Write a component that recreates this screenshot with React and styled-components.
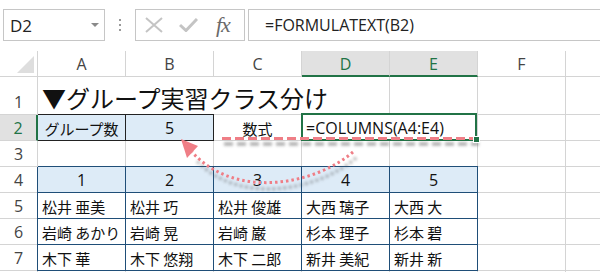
import React from 'react';
import styled, { createGlobalStyle } from 'styled-components';

const GlobalStyle = createGlobalStyle`
  html, body { margin: 0; padding: 0; background: #fff; }
  body { overflow: hidden; }
`;

const GRID = '#d4d4d4';
const NAVY = '#1f4e78';
const GREEN = '#217346';
const FILL = '#ddebf7';
const UI_FONT = `"Open Sans", "Noto Sans", sans-serif`;
const CELL_FONT = `"Noto Sans CJK JP", "Noto Sans", sans-serif`;
const LATIN_FONT = `"Open Sans", "Noto Sans CJK JP", sans-serif`;

// Page
const Page = styled.div`
  position: relative;
  width: 600px;
  height: 272px;
  overflow: hidden;
  background: #fff;
`;

// Formula bar
const FormulaBar = styled.div`
  height: 51px;
  box-sizing: border-box;
  padding: 9px 0 0 3px;
  display: flex;
  align-items: flex-start;
`;

const NameBox = styled.div`
  width: 102px;
  height: 32px;
  box-sizing: border-box;
  border: 1px solid #c6c6c6;
  display: flex;
  align-items: center;
  justify-content: space-between;
  padding: 0 5px 0 6px;
  font-family: ${UI_FONT};
  font-size: 17px;
  color: #222;
`;

const Caret = styled.span`
  width: 0;
  height: 0;
  border-left: 4px solid transparent;
  border-right: 4px solid transparent;
  border-top: 4px solid #8a8a8a;
`;

const Grip = styled.div`
  width: 30px;
  height: 32px;
  display: flex;
  flex-direction: column;
  align-items: center;
  justify-content: center;
  gap: 3px;
  span {
    width: 2px;
    height: 2px;
    background: #9a9a9a;
  }
`;

const FxBox = styled.div`
  width: 110px;
  height: 32px;
  box-sizing: border-box;
  border: 1px solid #c6c6c6;
  display: flex;
  align-items: center;
  padding: 0 0 0 9px;
  gap: 16px;
`;

const Fx = styled.span`
  font-family: "Liberation Serif", serif;
  font-style: italic;
  font-size: 22px;
  color: #6a6a6a;
  margin-left: 2px;
  letter-spacing: -1px;
`;

const FormulaInput = styled.div`
  flex: 1;
  margin-left: 3px;
  height: 32px;
  box-sizing: border-box;
  border: 1px solid #c6c6c6;
  border-right: none;
  display: flex;
  align-items: center;
  padding-left: 16px;
  font-family: ${UI_FONT};
  font-size: 16px;
  color: #222;
`;

// Sheet grid
const Sheet = styled.div`
  display: grid;
  grid-template-columns: 38px repeat(7, 88px);
  grid-template-rows: 26px 38px repeat(7, 26px);
`;

const Corner = styled.div`
  box-sizing: border-box;
  border-right: 1px solid ${GRID};
  border-bottom: 1px solid ${GRID};
  display: flex;
  align-items: flex-end;
  justify-content: flex-end;
  padding: 0 3px 3px 0;
  span {
    width: 0;
    height: 0;
    border-left: 17px solid transparent;
    border-bottom: 17px solid #dedede;
  }
`;

const ColHead = styled.div`
  box-sizing: border-box;
  border-right: 1px solid ${GRID};
  border-bottom: ${p => (p.$on ? `2px solid ${GREEN}` : `1px solid ${GRID}`)};
  background: ${p => (p.$on ? '#e1e1e1' : '#fff')};
  color: ${p => (p.$on ? GREEN : '#444')};
  font-family: ${UI_FONT};
  font-size: 16px;
  display: flex;
  align-items: center;
  justify-content: center;
  padding-top: 1px;
`;

const RowHead = styled.div`
  box-sizing: border-box;
  border-right: ${p => (p.$on ? `2px solid ${GREEN}` : `1px solid ${GRID}`)};
  border-bottom: 1px solid ${GRID};
  background: ${p => (p.$on ? '#e1e1e1' : '#fff')};
  color: ${p => (p.$on ? GREEN : '#444')};
  font-family: ${UI_FONT};
  font-size: 16px;
  display: flex;
  align-items: flex-end;
  justify-content: center;
  padding-bottom: 1px;
`;

const Cell = styled.div`
  box-sizing: border-box;
  grid-column: span ${p => p.$span || 1};
  border-right: 1px solid ${p => p.$line || GRID};
  border-bottom: 1px solid ${p => p.$line || GRID};
  box-shadow: ${p =>
    p.$line
      ? `0 -1px 0 ${p.$line}${p.$open ? '' : `, -1px 0 0 ${p.$line}`}`
      : 'none'};
  background: ${p => p.$bg || '#fff'};
  display: flex;
  align-items: flex-end;
  justify-content: ${p => (p.$center ? 'center' : 'flex-start')};
  padding: 0 4px 4px;
  font-family: ${p => (p.$latin ? LATIN_FONT : CELL_FONT)};
  font-size: ${p => p.$size || 15}px;
  line-height: 1;
  color: #111;
  white-space: nowrap;
`;

const Selected = styled(Cell)`
  position: relative;
  &::after {
    content: '';
    position: absolute;
    left: -1px;
    top: -2px;
    right: 0;
    bottom: -1px;
    border: 2px solid ${GREEN};
  }
  &::before {
    content: '';
    position: absolute;
    right: -3px;
    bottom: -3px;
    width: 5px;
    height: 5px;
    background: ${GREEN};
    border: 1px solid #fff;
    z-index: 1;
  }
`;

const Overlay = styled.svg`
  position: absolute;
  left: 0;
  top: 0;
  pointer-events: none;
`;

// G is off the right edge, its letter never shows
const cols = ['A', 'B', 'C', 'D', 'E', 'F', ''];

const names = [
  ['松井 亜美', '松井 巧', '松井 俊雄', '大西 璃子', '大西 大'],
  ['岩崎 あかり', '岩崎 晃', '岩崎 巌', '杉本 理子', '杉本 碧'],
  ['木下 華', '木下 悠翔', '木下 二郎', '新井 美紀', '新井 新'],
];

function Blank({ n }) {
  return Array.from({ length: n }, (_, i) => <Cell key={i} />);
}

export default function App() {
  return (
    <Page>
      <GlobalStyle />
      <FormulaBar>
        <NameBox>
          D2
          <Caret />
        </NameBox>
        <Grip>
          <span />
          <span />
          <span />
        </Grip>
        <FxBox>
          <svg width="18" height="16" viewBox="0 0 18 16">
            <path d="M1 1 L17 15 M17 1 L1 15" stroke="#c4c4c4" strokeWidth="2" fill="none" />
          </svg>
          <svg width="19" height="14" viewBox="0 0 19 14">
            <path d="M1 7 L7 12.5 L18 1" stroke="#c4c4c4" strokeWidth="3" fill="none" />
          </svg>
          <Fx>fx</Fx>
        </FxBox>
        <FormulaInput>=FORMULATEXT(B2)</FormulaInput>
      </FormulaBar>

      <Sheet>
        <Corner>
          <span />
        </Corner>
        {cols.map((c, i) => (
          <ColHead key={i} $on={c === 'D' || c === 'E'}>
            {c}
          </ColHead>
        ))}

        <RowHead>1</RowHead>
        <Cell $span={4} $size={24}>
          ▼グループ実習クラス分け
        </Cell>
        <Blank n={3} />

        <RowHead $on>2</RowHead>
        <Cell $line="#222" $bg={FILL} $center $open>
          グループ数
        </Cell>
        <Cell $line="#222" $bg={FILL} $center $latin $size={16}>
          5
        </Cell>
        <Cell $center>数式</Cell>
        <Selected $span={2} $latin $size={16}>
          =COLUMNS(A4:E4)
        </Selected>
        <Blank n={2} />

        <RowHead>3</RowHead>
        <Blank n={7} />

        <RowHead>4</RowHead>
        {[1, 2, 3, 4, 5].map(n => (
          <Cell key={n} $line={NAVY} $bg={FILL} $center $latin $size={16}>
            {n}
          </Cell>
        ))}
        <Blank n={2} />

        {names.map((row, i) => (
          <React.Fragment key={i}>
            <RowHead>{i + 5}</RowHead>
            {row.map(name => (
              <Cell key={name} $line={NAVY}>
                {name}
              </Cell>
            ))}
            <Blank n={2} />
          </React.Fragment>
        ))}

        <RowHead />
        <Blank n={7} />
      </Sheet>

      <Overlay width="600" height="272" viewBox="0 0 600 272">
        <defs>
          <filter id="soft" x="-20%" y="-50%" width="140%" height="200%">
            <feGaussianBlur stdDeviation="1.6" />
          </filter>
        </defs>
        <g filter="url(#soft)" opacity="0.55">
          <line x1="224" y1="144" x2="479" y2="144" stroke="#555" strokeWidth="3" strokeDasharray="9 4" />
          <path d="M356 158 C 318 191, 238 206, 196 160" stroke="#555" strokeWidth="3" strokeDasharray="2.5 3" fill="none" />
        </g>
        <line x1="222" y1="138.5" x2="477" y2="138.5" stroke="#ef7e86" strokeWidth="3" strokeDasharray="9 4" />
        <path d="M353 152 C 315 185, 235 200, 192 152" stroke="#ef7e86" strokeWidth="3" strokeDasharray="2.5 3" fill="none" />
        <polygon points="181,139 198,146 187,158" fill="#ef7e86" />
      </Overlay>
    </Page>
  );
}
